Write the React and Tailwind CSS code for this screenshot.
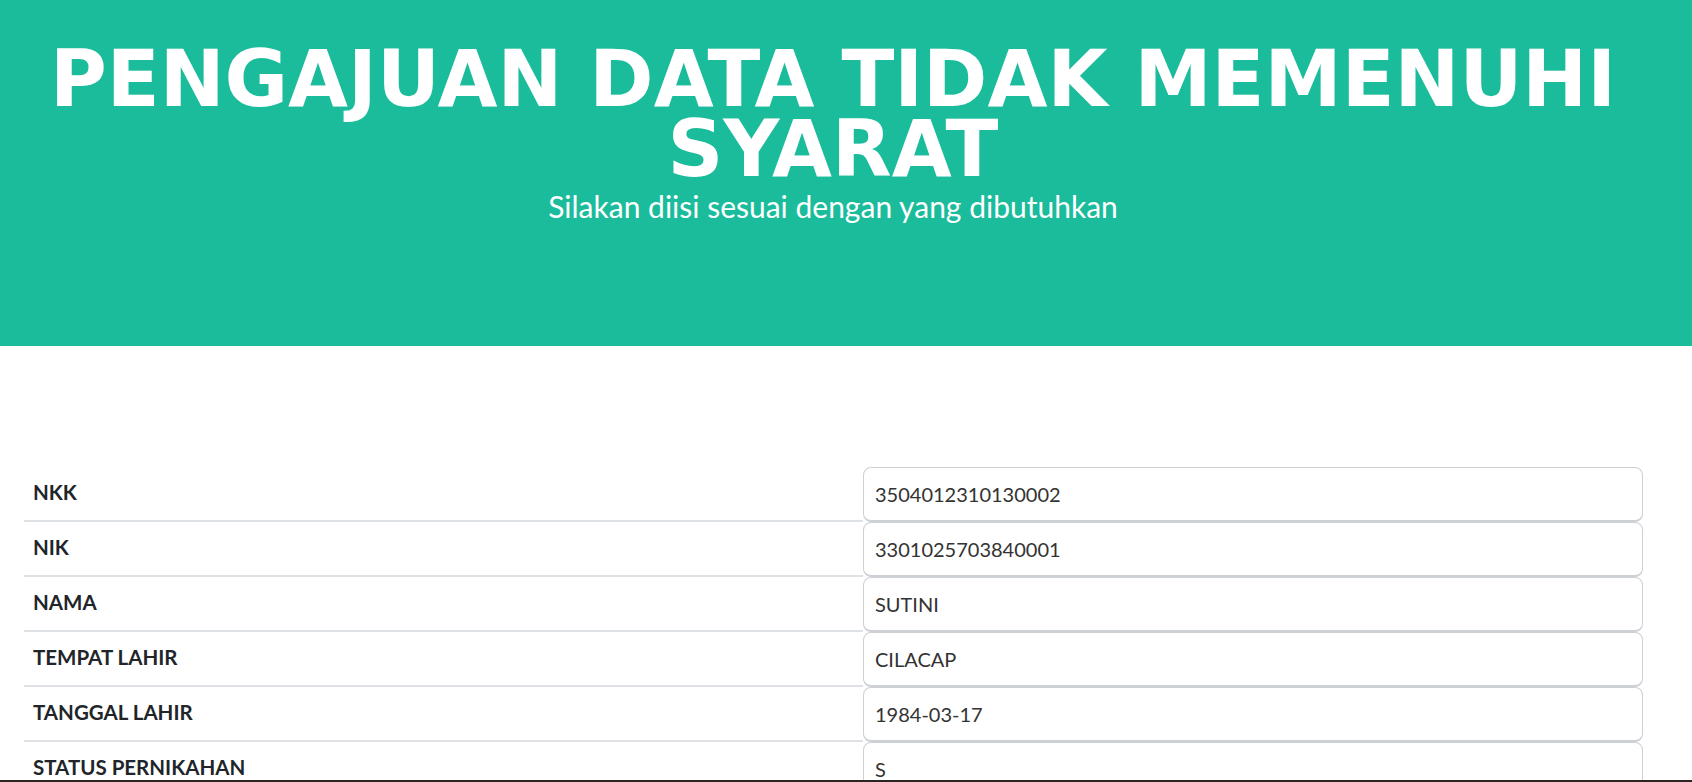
const rows = [
  ['NKK', '3504012310130002'],
  ['NIK', '3301025703840001'],
  ['NAMA', 'SUTINI'],
  ['TEMPAT LAHIR', 'CILACAP'],
  ['TANGGAL LAHIR', '1984-03-17'],
  ['STATUS PERNIKAHAN', 'S'],
];

export default function App() {
  return (
    <div className="min-h-screen bg-white font-['Lato',sans-serif]">
      {/* header */}
      <header className="h-[346px] bg-[#1abc9c] pt-[44px] pr-[26px] text-center text-white">
        <h1 className="font-['DejaVu_Sans',sans-serif] text-[77.5px] font-bold leading-[70px]">
          PENGAJUAN DATA TIDAK MEMENUHI SYARAT
        </h1>
        <p className="text-[30px]">Silakan diisi sesuai dengan yang dibutuhkan</p>
      </header>

      {/* data table */}
      <section className="pt-[121px] pl-[24px] pr-[49px]">
        {rows.map(([label, value]) => (
          <div key={label} className="flex h-[55px]">
            <div className="flex flex-1 items-center border-b-2 border-[#dee2e6] pb-[3px] pl-[9px] text-[20.5px] font-bold text-[#212529]">
              {label}
            </div>
            <input
              readOnly
              value={value}
              className="h-[55px] w-[780px] rounded-lg border border-b-2 border-[#cdd0d5] bg-white px-[11px] text-[20px] text-[#333] outline-none"
            />
          </div>
        ))}
      </section>

      <div className="fixed bottom-0 left-0 h-[2px] w-full bg-[#2a2421]" />
    </div>
  );
}
